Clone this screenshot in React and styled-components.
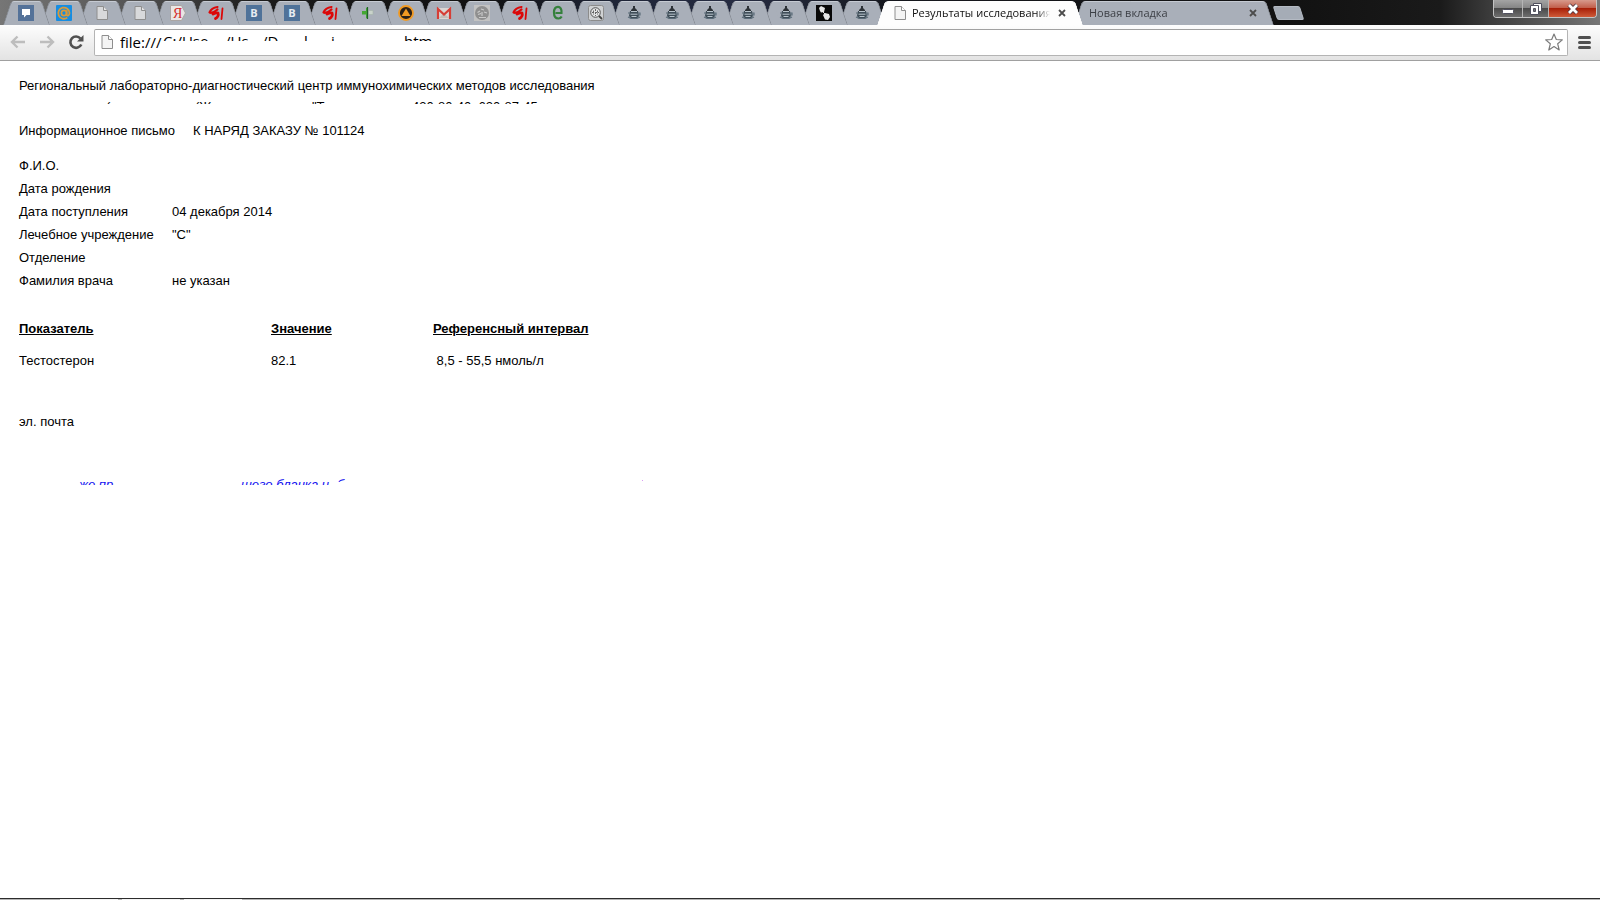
import React from "react";

import styled, { createGlobalStyle, css } from "styled-components";

const PageIcon = () => (
  <svg width="16" height="16" viewBox="0 0 16 16">
    <path d="M3 1.5h6.5l4 4v9H3z" fill="#f4f4f4" stroke="#8e8e8e" />
    <path d="M9.5 1.5v4h4" fill="#fff" stroke="#8e8e8e" />
  </svg>
);

const DimPageIcon = () => (
  <svg width="16" height="16" viewBox="0 0 16 16">
    <path d="M3 1.5h6.5l4 4v9H3z" fill="#d8d9db" stroke="#8e8e8e" />
    <path d="M9.5 1.5v4h4" fill="#e4e4e6" stroke="#8e8e8e" />
  </svg>
);

const ChatIcon = () => (
  <svg width="16" height="16" viewBox="0 0 16 16">
    <rect width="16" height="16" fill="#547299" />
    <path d="M4 4h8v6H8.5L6 12.5V10H4z" fill="#fff" />
  </svg>
);

const MailIcon = () => (
  <svg width="16" height="16" viewBox="0 0 16 16">
    <rect width="16" height="16" rx="1" fill="#168de2" />
    <circle cx="8" cy="8" r="2.6" fill="none" stroke="#d99a3a" strokeWidth="1.8" />
    <path
      d="M10.6 5.2v4.2c0 2 2.9 1.6 2.9-1.4A5.6 5.6 0 1 0 11.3 12.6"
      fill="none"
      stroke="#d99a3a"
      strokeWidth="1.8"
    />
  </svg>
);

const YandexIcon = () => (
  <svg width="16" height="16" viewBox="0 0 16 16">
    <path d="M.5.5h11l4 7.5-4 7.5H.5z" fill="#e9e6e5" stroke="#aaa5a3" />
    <text x="3" y="13" fill="#d42a2a" fontFamily="Liberation Serif, serif" fontSize="14">
      Я
    </text>
  </svg>
);

const BrushIcon = () => (
  <svg width="16" height="16" viewBox="0 0 16 16">
    <path
      d="M9.5 2C6 2.5 2.500 5 1.500 7.500c2 .8 4.500 0 8-3"
      fill="none"
      stroke="#dc0808"
      strokeWidth="2.200"
      strokeLinecap="round"
      strokeLinejoin="round"
    />
    <path
      d="M5 9c2-1 4-1.500 5-1 .8 2-.5 4.500-2.500 5.500"
      fill="none"
      stroke="#dc0808"
      strokeWidth="2.800"
      strokeLinecap="round"
      strokeLinejoin="round"
    />
    <path d="M14.500 3.500 13.500 14" stroke="#dc0808" strokeWidth="1.800" strokeLinecap="round" />
  </svg>
);

const VkIcon = () => (
  <svg width="16" height="16" viewBox="0 0 16 16">
    <rect width="16" height="16" fill="#4f7299" />
    <text
      x="8"
      y="12"
      textAnchor="middle"
      fill="#e8ecf1"
      fontFamily="Open Sans, sans-serif"
      fontWeight="700"
      fontSize="11"
    >
      B
    </text>
  </svg>
);

const PlusIcon = () => (
  <svg width="16" height="16" viewBox="0 0 16 16">
    <path d="M8.500 5.500h4.500v4H8.500z" fill="#c9d3cb" stroke="#a5b3a9" strokeWidth=".6" />
    <path d="M2 6h4V3l2-1v12l-2-1V9.500H2z" fill="#44a832" />
    <path d="M7.500 2v12" stroke="#1f6327" strokeWidth="1.200" />
  </svg>
);

const AimpIcon = () => (
  <svg width="16" height="16" viewBox="0 0 16 16">
    <circle cx="8" cy="8" r="7" fill="#2b2118" stroke="#f29a22" strokeWidth="1.800" />
    <path d="M8 3.500 12.500 11h-9z" fill="#f29a22" />
  </svg>
);

const GmailIcon = () => (
  <svg width="16" height="16" viewBox="0 0 16 16">
    <path d="M1 3h14v11H1z" fill="#d9d5d3" />
    <path d="m3 13 5-5 5 5z" fill="#c3bcb8" />
    <path d="M2 14V4l6 5.500L14 4v10" fill="none" stroke="#d63e36" strokeWidth="2.200" />
  </svg>
);

const TreeIcon = () => (
  <svg width="16" height="16" viewBox="0 0 16 16">
    <rect width="16" height="16" fill="#c2c2c2" />
    <circle cx="8" cy="8" r="7" fill="#8f8f8f" />
    <path
      d="M3.500 7.500 6 6M7 4l3 1M10 7l3 1M4 9.500l3-1M8 7v4M5 12.500h7"
      fill="none"
      stroke="#c9c9c9"
      strokeWidth="1.200"
    />
  </svg>
);

const LetterIcon = () => (
  <svg width="16" height="16" viewBox="0 0 16 16">
    <path
      d="M5.500 8h6C12 4 10 1.800 8 1.800c-2.800 0-4 2.700-4 5.700 0 4 2 6 4.500 6 1.500 0 2.500-.8 3.200-2"
      fill="none"
      stroke="#35803c"
      strokeWidth="2.200"
    />
  </svg>
);

const SearchIcon = () => (
  <svg width="16" height="16" viewBox="0 0 16 16">
    <rect x=".5" y=".5" width="15" height="15" rx="2" fill="#cfd1d3" stroke="#8c8c8c" />
    <circle cx="7.500" cy="7.500" r="4.800" fill="#e4e5e6" stroke="#555" />
    <path d="M7.500 4v7M4 7.500h7M5.500 5.500v4M9.500 5.500v4" stroke="#666" strokeDasharray="2 1" />
    <path d="m11 11 3 3" stroke="#444" strokeWidth="1.800" />
  </svg>
);

const TeapotIcon = () => (
  <svg width="16" height="16" viewBox="0 0 16 16">
    <path d="M7 1h2v2l2 2v1H5V5l2-2z" fill="#2d3237" />
    <path d="M4 6h8l1 5-2 2.500H5L3 11z" fill="#3f4d58" />
    <path d="M5 6.500h6M4.500 9.200h7M5.500 11.500h5" stroke="#c5d0d8" strokeWidth=".9" />
    <path
      d="M2 8h2M12 8h2v2h-2M2 12l3 1.500h6l3-1.500"
      fill="none"
      stroke="#5b6c79"
      strokeWidth="1.200"
    />
  </svg>
);

const DarkIcon = () => (
  <svg width="16" height="16" viewBox="0 0 16 16">
    <rect width="16" height="16" fill="#080808" />
    <path d="m3 3 2-2 2 1 2 1-1 4-3 .5L4 6zM7 10l2-2 4 1 1 3-2 3-3-.5z" fill="#e4e4e4" />
    <path d="m6 6 4 4" stroke="#e4e4e4" />
  </svg>
);

const tabs = [
  { title: "Сообщения", Icon: ChatIcon },
  { title: "Почта", Icon: MailIcon },
  { title: "Страница", Icon: DimPageIcon },
  { title: "Страница", Icon: DimPageIcon },
  { title: "Яндекс", Icon: YandexIcon },
  { title: "Форум", Icon: BrushIcon },
  { title: "ВКонтакте", Icon: VkIcon },
  { title: "ВКонтакте", Icon: VkIcon },
  { title: "Форум", Icon: BrushIcon },
  { title: "Аптека", Icon: PlusIcon },
  { title: "Плеер", Icon: AimpIcon },
  { title: "Gmail", Icon: GmailIcon },
  { title: "Дерево", Icon: TreeIcon },
  { title: "Форум", Icon: BrushIcon },
  { title: "Каталог", Icon: LetterIcon },
  { title: "Поиск", Icon: SearchIcon },
  { title: "Чайник", Icon: TeapotIcon },
  { title: "Чайник", Icon: TeapotIcon },
  { title: "Чайник", Icon: TeapotIcon },
  { title: "Чайник", Icon: TeapotIcon },
  { title: "Чайник", Icon: TeapotIcon },
  { title: "Спорт", Icon: DarkIcon },
  { title: "Чайник", Icon: TeapotIcon },
];

const details = [
  ["Ф.И.О.", ""],
  ["Дата рождения", ""],
  ["Дата поступления", "04 декабря 2014"],
  ["Лечебное учреждение", '"С"'],
  ["Отделение", ""],
  ["Фамилия врача", "не указан"],
];

function CloseMark() {
  return (
    <svg width="8" height="8" viewBox="0 0 8 8">
      <path d="m1 1 6 6M7 1 1 7" stroke="#4c4c4c" strokeWidth="1.800" />
    </svg>
  );
}

function TabStrip() {
  return (
    <StyledTitleBar>
      <StyledTabs>
        {tabs.map(({ title, Icon }, i) => (
          <StyledTab key={i} $width={47} $level={tabs.length - i}>
            <StyledTabButton aria-label={title}>
              <Icon />
            </StyledTabButton>
          </StyledTab>
        ))}
        <StyledTab $width={206} $active $level={40}>
          <StyledTabButton>
            <PageIcon />
            <StyledTabTitle $active>Результаты исследования</StyledTabTitle>
          </StyledTabButton>
          <StyledTabClose aria-label="Закрыть">
            <CloseMark />
          </StyledTabClose>
        </StyledTab>
        <StyledTab $width={200} $level={0}>
          <StyledTabButton>
            <StyledTabTitle>Новая вкладка</StyledTabTitle>
          </StyledTabButton>
          <StyledTabClose aria-label="Закрыть">
            <CloseMark />
          </StyledTabClose>
        </StyledTab>
        <StyledNewTab aria-label="Открыть вкладку" />
      </StyledTabs>
      <StyledWindowControls>
        <StyledWindowButton $width={28} aria-label="Свернуть">
          <svg width="12" height="14" viewBox="0 0 12 14">
            <rect x=".5" y="7.500" width="11" height="4" rx="1" fill="#fff" stroke="#50505e" />
          </svg>
        </StyledWindowButton>
        <StyledWindowButton $width={26} aria-label="Восстановить">
          <svg width="12" height="14" viewBox="0 0 12 14">
            <path d="M3.500 1.500h8v8h-8z" fill="#fff" stroke="#50505e" />
            <path d="M.5 3.500h8v9h-8z" fill="#fff" stroke="#50505e" />
            <path d="M3.500 6.500h2v3h-2z" fill="#777" stroke="#50505e" />
          </svg>
        </StyledWindowButton>
        <StyledWindowButton $width={48} $close aria-label="Закрыть окно">
          <svg width="14" height="14" viewBox="0 0 14 14">
            <path d="m3 3 8 8M11 3l-8 8" stroke="#4f3540" strokeWidth="4.500" />
            <path d="m3 3 8 8M11 3l-8 8" stroke="#fff" strokeWidth="2.800" />
          </svg>
        </StyledWindowButton>
      </StyledWindowControls>
    </StyledTitleBar>
  );
}

function Toolbar() {
  return (
    <StyledToolbar>
      <StyledToolButton aria-label="Назад">
        <svg width="16" height="14" viewBox="0 0 16 14">
          <path d="M15 7H2M7.500 1.500 2 7l5.500 5.500" fill="none" stroke="#bdbdbd" strokeWidth="2.400" />
        </svg>
      </StyledToolButton>
      <StyledToolButton aria-label="Вперёд">
        <svg width="16" height="14" viewBox="0 0 16 14">
          <path d="M1 7h13M8.500 1.500 14 7l-5.500 5.500" fill="none" stroke="#bdbdbd" strokeWidth="2.400" />
        </svg>
      </StyledToolButton>
      <StyledToolButton aria-label="Обновить">
        <svg width="16" height="16" viewBox="0 0 16 16">
          <path d="M12.500 4.500A5.700 5.700 0 1 0 13.300 10.500" fill="none" stroke="#505050" strokeWidth="2.600" />
          <path d="M15.500 1v6.500H9z" fill="#505050" />
        </svg>
      </StyledToolButton>
      <StyledOmnibox>
        <PageIcon />
        <StyledAddress aria-label="Адрес" defaultValue="file:///" />
        <StyledAddressCut $width={62}>C:/Use</StyledAddressCut>
        <StyledAddressCut $width={37}>/Us</StyledAddressCut>
        <StyledAddressCut $width={42}>/D</StyledAddressCut>
        <StyledAddressCut $width={27}>l</StyledAddressCut>
        <StyledAddressCut $width={73}>i</StyledAddressCut>
        <StyledAddressCut $width={30}>htm</StyledAddressCut>
        <StyledStar aria-label="Добавить в закладки">
          <svg width="18" height="18" viewBox="0 0 18 18">
            <path
              d="m9 1 2.300 5.500 6 .4-4.600 3.900L14.200 17 9 13.600 3.800 17l1.500-6.200L.7 6.900l6-.4z"
              fill="#fff"
              stroke="#7b7b7b"
              strokeWidth="1.200"
              strokeLinejoin="round"
            />
          </svg>
        </StyledStar>
      </StyledOmnibox>
      <StyledToolButton aria-label="Меню">
        <svg width="13" height="13" viewBox="0 0 13 13">
          <path d="M1.500 1.500h10M1.500 6.500h10M1.500 11.500h10" stroke="#505050" strokeWidth="3" strokeLinecap="round" />
        </svg>
      </StyledToolButton>
    </StyledToolbar>
  );
}

function Report() {
  return (
    <StyledReport>
      <StyledLine>
        Региональный лабораторно-диагностический центр иммунохимических методов исследования
      </StyledLine>
      <StyledCutLine>
        <StyledCut $gap={87} $width={89} $height={5}>(</StyledCut>
        <StyledCut $width={117} $height={5}>(Ж</StyledCut>
        <StyledCut $width={100} $height={5}>"Т</StyledCut>
        <StyledCut $height={5}>430-80-40, 620-87-45</StyledCut>
      </StyledCutLine>
      <StyledLetter>
        <span>Информационное письмо</span>
        <span>К НАРЯД ЗАКАЗУ № 101124</span>
      </StyledLetter>
      <StyledDetails>
        <tbody>
          {details.map(([label, value]) => (
            <tr key={label}>
              <th scope="row">{label}</th>
              <td>{value}</td>
            </tr>
          ))}
        </tbody>
      </StyledDetails>
      <StyledResults>
        <thead>
          <tr>
            <th scope="col">Показатель</th>
            <th scope="col">Значение</th>
            <th scope="col">Референсный интервал</th>
          </tr>
        </thead>
        <tbody>
          <tr>
            <td>Тестостерон</td>
            <td>82.1</td>
            <td>&nbsp;8,5 - 55,5 нмоль/л</td>
          </tr>
        </tbody>
      </StyledResults>
      <StyledLine>эл. почта</StyledLine>
      <StyledNote>
        <StyledCut $gap={60} $width={162} $height={8}>же пр</StyledCut>
        <StyledCut $width={96} $height={8}>шего бланка и</StyledCut>
        <StyledCut $width={304} $height={5}>б</StyledCut>
        <StyledCut $height={4}>'</StyledCut>
      </StyledNote>
    </StyledReport>
  );
}

function App() {
  return (
    <StyledWindow>
      <GlobalStyle />
      <TabStrip />
      <Toolbar />
      <Report />
      <StyledTaskbar>
        <i />
        <i />
        <i />
      </StyledTaskbar>
    </StyledWindow>
  );
}

export default App;
//
//
//
//
//
/****************** styles ******************/

const GlobalStyle = createGlobalStyle`
  * {
    box-sizing: border-box;
  }
  body {
    margin: 0;
    background: #fff;
    color: #000;
    font-family: "Liberation Sans", Arial, sans-serif;
    font-size: 13px;
    line-height: 16px;
  }
  button {
    padding: 0;
    border: none;
    background: none;
    font: inherit;
    color: inherit;
  }
  svg {
    display: block;
    flex: none;
  }
`;

const StyledWindow = styled.div`
  display: flex;
  flex-direction: column;
  min-height: 100vh;
`;

const StyledTitleBar = styled.div`
  display: flex;
  justify-content: space-between;
  align-items: flex-start;
  height: 25px;
  padding: 0 3px;
  background: linear-gradient(
    90deg,
    #767676 0%,
    #555 8%,
    #1c1c1c 16%,
    #111 30%,
    #1e2436 38%,
    #262c42 46%,
    #15171d 56%,
    #111 80%,
    #1a1a1a 90%,
    #3a3a3a 93%,
    #777 100%
  );
`;

const StyledTabs = styled.div`
  display: flex;
  align-items: flex-start;
  padding-top: 1px;
  isolation: isolate;
`;

const tabSide = css`
  content: "";
  position: absolute;
  z-index: -1;
  top: 0;
  bottom: 0;
  border: 1px solid ${(p) => (p.$active ? "#fff" : "#868b93")};
  border-top-color: ${(p) => (p.$active ? "#fff" : "#c5cad2")};
  border-bottom: none;
  background: ${(p) => (p.$active ? "#fdfdfd" : "#a9afb9")};
`;

const StyledTab = styled.div`
  position: relative;
  z-index: ${(p) => p.$level};
  display: flex;
  align-items: center;
  width: ${(p) => p.$width}px;
  height: 24px;
  margin-right: -9px;
  padding: 0 13px 0 15px;
  isolation: isolate;

  /* the two slanted halves overlap in the middle */
  &::before {
    ${tabSide}
    left: 4px;
    right: 30%;
    border-right: none;
    border-top-left-radius: 4px;
    transform: skewX(-18deg);
  }
  &::after {
    ${tabSide}
    left: 30%;
    right: 4px;
    border-left: none;
    border-top-right-radius: 4px;
    transform: skewX(18deg);
  }
`;

const StyledTabButton = styled.button`
  display: flex;
  flex: 1;
  align-items: center;
  gap: 4px;
  min-width: 0;
  height: 22px;
`;

const StyledTabTitle = styled.span`
  flex: 1;
  overflow: hidden;
  font-family: "Open Sans", "Noto Sans", sans-serif;
  font-size: 11px;
  text-align: left;
  white-space: nowrap;
  color: ${(p) => (p.$active ? "#111" : "#3c3f45")};
  mask-image: linear-gradient(90deg, #000 90%, transparent);
`;

const StyledTabClose = styled.button`
  display: grid;
  place-items: center;
  width: 16px;
  height: 16px;
  margin-left: 4px;
`;

const StyledNewTab = styled.button`
  width: 27px;
  height: 14px;
  margin: 5px 0 0 10px;
  border: 1px solid #b4bac3;
  border-radius: 2px;
  background: #a5acb6;
  transform: skewX(18deg);
`;

const StyledWindowControls = styled.div`
  display: flex;
  height: 18px;
  border: 1px solid #c4c4c4;
  border-top: none;
  border-radius: 0 0 4px 4px;
  overflow: hidden;
`;

const StyledWindowButton = styled.button`
  display: grid;
  place-items: center;
  width: ${(p) => p.$width}px;
  height: 17px;
  background: ${(p) =>
    p.$close
      ? "linear-gradient(#d79a8c, #c2604c 45%, #a82008 50%, #cf5a38)"
      : "linear-gradient(#a4a4a4, #868686 45%, #4a4a4a 50%, #6e6e6e)"};

  & + & {
    border-left: 1px solid #b5b5b5;
  }
`;

const StyledToolbar = styled.div`
  display: flex;
  align-items: center;
  gap: 13px;
  height: 36px;
  padding: 0 9px 1px 10px;
  border-bottom: 1px solid #a0a0a0;
  background: linear-gradient(#fdfdfd, #e3e3e3);
`;

const StyledToolButton = styled.button`
  display: flex;
  align-items: center;
  height: 26px;
`;

const StyledOmnibox = styled.div`
  display: flex;
  flex: 1;
  align-items: center;
  height: 27px;
  margin: 0 -3px;
  padding: 0 4px;
  border: 1px solid #b4b4b4;
  border-top-color: #a0a0a0;
  border-radius: 2px;
  background: #fff;
  font-family: "Open Sans", "Noto Sans", sans-serif;
  font-size: 15px;
  line-height: 22px;
`;

const StyledAddress = styled.input`
  width: 43px;
  height: 22px;
  margin-left: 5px;
  padding: 0;
  border: none;
  outline: none;
  background: none;
  font: inherit;
`;

const StyledAddressCut = styled.span`
  align-self: flex-start;
  width: ${(p) => p.$width}px;
  height: 11px;
  overflow: hidden;
  white-space: nowrap;
`;

const StyledStar = styled.button`
  margin-left: auto;
`;

const StyledReport = styled.main`
  flex: 1;
  padding: 17px 19px;
`;

const StyledLine = styled.p`
  margin: 0;
`;

const StyledCutLine = styled.div`
  display: flex;
  height: 6px;
  margin: 5px 0 18px;
`;

const StyledCut = styled.span`
  width: ${(p) => (p.$width ? `${p.$width}px` : "auto")};
  height: ${(p) => p.$height}px;
  margin-left: ${(p) => p.$gap || 0}px;
  overflow: hidden;
  white-space: nowrap;
`;

const StyledLetter = styled.div`
  display: flex;
  gap: 18px;
`;

const StyledDetails = styled.table`
  margin-top: 15px;
  border-collapse: collapse;

  th,
  td {
    height: 23px;
    padding: 0;
    font-weight: 400;
    text-align: left;
  }
  th {
    width: 153px;
  }
`;

const StyledResults = styled.table`
  margin: 21px 0 37px;
  border-collapse: collapse;

  th,
  td {
    height: 32px;
    padding: 0;
    text-align: left;
  }
  th {
    text-decoration: underline;
  }
  th:first-child {
    width: 252px;
  }
  th:nth-child(2) {
    width: 162px;
  }
`;

const StyledNote = styled.div`
  display: flex;
  margin-top: 47px;
  color: #1010f0;
  font-style: italic;
`;

const StyledTaskbar = styled.footer`
  display: flex;
  gap: 4px;
  height: 2px;
  padding-left: 60px;
  border-top: 1px solid #2c2c2c;
  background: #b5b5b5;

  i {
    width: 58px;
    background: #f4f4f4;
  }
`;
